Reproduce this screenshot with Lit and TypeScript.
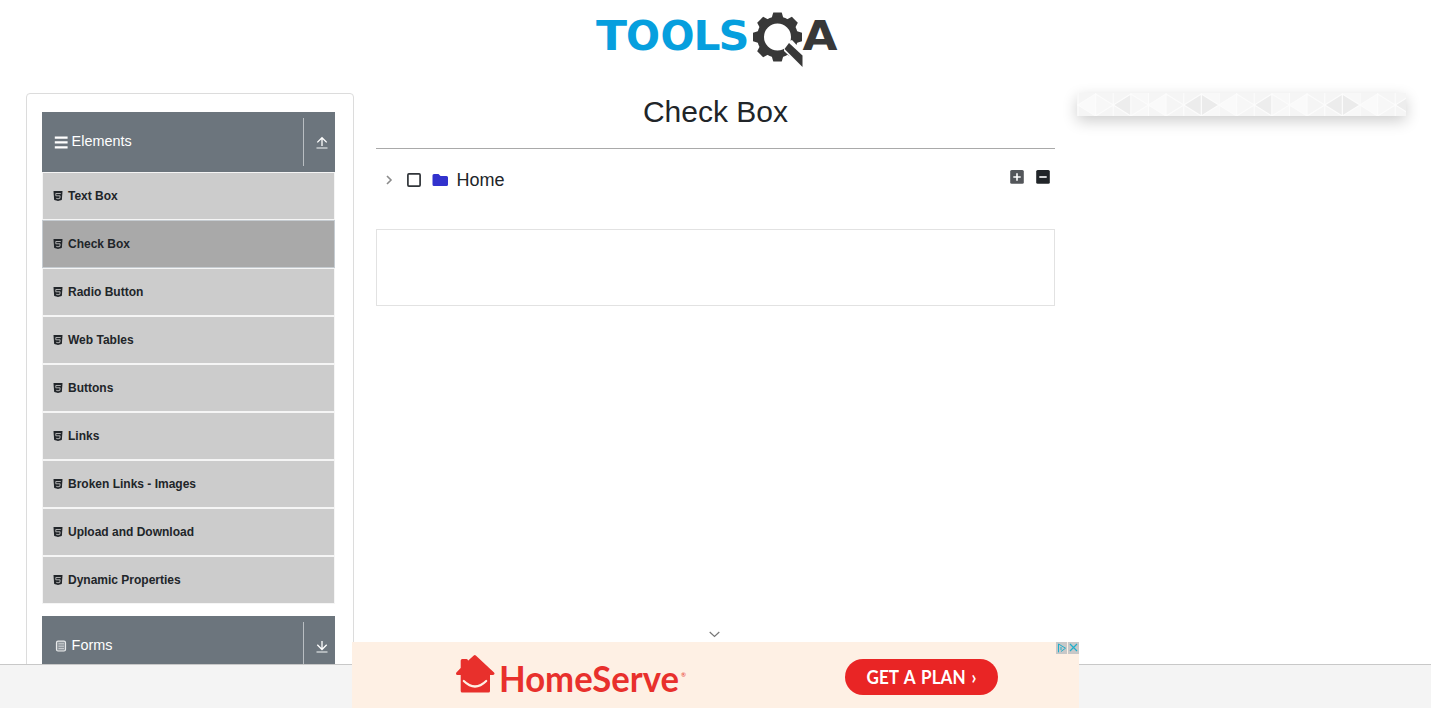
import { LitElement, html, svg, css } from 'lit';
import { customElement } from 'lit/decorators.js';

const items = ['Text Box', 'Check Box', 'Radio Button', 'Web Tables', 'Buttons', 'Links', 'Broken Links - Images', 'Upload and Download', 'Dynamic Properties'];

const html5 = html`<svg class="h5" viewBox="0 0 10 10"><path d="M.5 0H9.500L8.900 8.600Q8.800 9.400 5 10Q1.200 9.400 1.100 8.600Z" fill="currentColor"/><path d="M7.800 2.500H2.800V4.800H7.100L6.900 7.300L5 7.800L3.200 7.300" fill="none" stroke="#c4c4c4" stroke-width=".85"/></svg>`;

const arrow = (up: boolean) => html`<svg class="arrow" viewBox="0 0 12 14" fill="none">
  <path d=${up ? 'M6 10V2M1.3 6.4L6 1.7L10.7 6.4' : 'M6 1V9.5M1.3 4.8L6 9.500L10.7 4.8'} stroke="#fff" stroke-width="1.3"/>
  <path d="M.5 12H11.500" stroke="#c4c8cb" stroke-width="1.600"/></svg>`;

const teeth = [0, 45, 90, 135, 180, 225, 270, 315].map(a => svg`<path d="M-6.2 -18L-4.200 -24.500H4.200L6.200 -18Z" transform="rotate(${a})"/>`);

const diamonds = [
  ['#fafafa', '#f7f7f7'], ['#ededed', '#f6f6f6'], ['#fafafa', '#f5f5f5'], ['#ececec', '#ebebeb'],
].map(([l, r], i) => {
  const x = i * 35.25;
  return svg`<path d="M${x} 12L${x + 17.6} 1V23Z" fill=${l}/><path d="M${x + 35.2} 12L${x + 17.6} 1V23Z" fill=${r}/>
  <path d="M${x} 12L${x + 17.6} 1L${x + 35.2} 12L${x + 17.6} 23ZM${x + 17.6} 0V23M${x} 0V23" fill="none" stroke="#fcfcfc" stroke-width="1.2"/>`;
});

@customElement('app-root')
export class AppRoot extends LitElement {
  static styles = css`
    :host { display: block; position: relative; width: 1440px; height: 708px; overflow: hidden; background: #fff; color: #212529; font-family: "Liberation Sans", Arial, sans-serif; }
    * { box-sizing: border-box; }
    svg { display: block; flex: none; }
    .top { display: flex; height: 93px; padding-left: 590px; }
    .cols { display: flex; align-items: flex-start; padding-left: 26px; }
    .card { width: 328px; height: 640px; border: 1px solid #dcdcdc; border-radius: 4px; padding: 18px 18px 0 15px; }
    .group { display: flex; align-items: center; height: 60px; background: #6c757d; color: #fff; font-size: 14.4px; }
    .glyph { width: 14px; height: 14px; margin: 1px 3.6px 0 12px; }
    .name { flex: 1; line-height: 18px; margin-top: -2px; }
    .toggle { display: flex; align-items: center; width: 32px; height: 48px; border-left: 1px solid #b9bec2; padding: 2px 0 0 12px; }
    .arrow { width: 12px; height: 14px; }
    .list { margin-bottom: 12px; }
    .item { display: flex; align-items: center; height: 48px; border: 1px solid #f5f5f5; background: #ccc; padding-left: 10px; font-size: 12px; font-weight: bold; }
    .item.active { background: #a9a9a9; border-color: #c6ccd1; }
    .h5 { width: 10px; height: 10px; margin-right: 5px; }
    .main { width: 679px; margin-left: 22px; }
    h1 { margin: 0; height: 56px; border-bottom: 1px solid #a9a9a9; text-align: center; font-size: 30px; font-weight: 400; line-height: 38px; }
    .tree { display: flex; height: 80px; align-items: flex-start; padding: 22px 4px 0 8px; }
    .home { flex: 1; font-size: 18px; line-height: 20px; margin: -1px 0 0 7.500px; }
    .folder { margin-left: 8px; }
    .check { margin-left: 8px; }
    .tools { display: flex; gap: 10px; margin-top: -3px; }
    .result { height: 77px; border: 1px solid #e2e2e2; }
    .side { width: 329px; height: 23px; margin-left: 22px; box-shadow: 0 5px 15px rgba(0,0,0,.2); }
    .dock { position: absolute; left: 0; bottom: 0; width: 1431px; height: 44px; background: #f4f4f4; border-top: 1px solid #c8c8c8; }
    .ad { position: absolute; left: 352px; bottom: 0; width: 727px; height: 66px; background: #fef0e4; display: flex; }
    .brand { margin-left: 100px; }
    .cta { margin: 17px 0 0 151px; width: 153px; height: 36px; border-radius: 18px; background: #e92525; }
    .choices { display: flex; gap: 1px; margin-left: auto; }
    .choice { width: 11px; height: 12px; background: #c8c8c8; }
    .chev { position: absolute; left: 709px; top: 631px; }
  `;

  render() {
    return html`
      <header class="top">
        <svg width="255" height="80" font-family="DejaVu Sans, sans-serif" font-weight="bold">
          <g fill="#069fde" font-size="41">
            <text x="6" y="50" textLength="31" lengthAdjust="spacingAndGlyphs">T</text>
            <text x="36" y="50" textLength="34" lengthAdjust="spacingAndGlyphs">O</text>
            <text x="70.500" y="50" textLength="34" lengthAdjust="spacingAndGlyphs">O</text>
            <text x="103.500" y="50" textLength="27" lengthAdjust="spacingAndGlyphs">L</text>
            <text x="128.500" y="50" textLength="31" lengthAdjust="spacingAndGlyphs">S</text>
          </g>
          <g transform="translate(187.5 37)" fill="#383838">${teeth}<circle r="17" fill="none" stroke="#383838" stroke-width="7"/></g>
          <path d="M194 43L202 40L215 54V71L194 51Z" fill="#fff"/>
          <path d="M199 43L212.500 55.500V67L194.500 49Z" fill="#383838"/>
          <text x="212.500" y="50" font-size="41" fill="#383838" textLength="35" lengthAdjust="spacingAndGlyphs">A</text>
        </svg>
      </header>
      <div class="cols">
        <nav class="card">
          <div class="group">
            <svg class="glyph" viewBox="0 0 14 14"><path d="M.8 1.600H13.600M.8 6.400H13.600M.8 11.300H13.600" stroke="#fff" stroke-width="2.200"/></svg>
            <span class="name">Elements</span><span class="toggle">${arrow(true)}</span>
          </div>
          <div class="list">${items.map(t => html`<div class="item ${t === 'Check Box' ? 'active' : ''}">${html5}${t}</div>`)}</div>
          <div class="group">
            <svg class="glyph" viewBox="0 0 14 14" fill="none" stroke="#e9ebec"><rect x="2.500" y="1.200" width="9" height="9.800" rx="1.500" fill="#8e959b" stroke-width="1.200"/><path d="M4.500 3.800H10M4.500 6.200H10M4.500 8.600H10" stroke="#d5d8da" stroke-width=".9"/></svg>
            <span class="name">Forms</span><span class="toggle">${arrow(false)}</span>
          </div>
        </nav>
        <main class="main">
          <h1>Check Box</h1>
          <div class="tree">
            <svg width="14" height="18" viewBox="0 0 14 18"><path d="M3 5L7 9L3 13" fill="none" stroke="#8b8b8b" stroke-width="1.600"/></svg>
            <svg class="check" width="18" height="18"><rect x="1.900" y="2.900" width="12.200" height="12.200" rx="1" fill="none" stroke="#303439" stroke-width="1.700"/></svg>
            <svg class="folder" width="17" height="18"><path d="M2 3H6.500L8.500 5H14.500Q16 5 16 6.500V13.500Q16 15 14.500 15H2Q.5 15 .5 13.500V4.500Q.5 3 2 3Z" fill="#3232cd"/></svg>
            <span class="home">Home</span>
            <span class="tools">
              <svg width="16" height="18"><rect x="1.200" y="2" width="13.600" height="13.800" rx="1.500" fill="#53565a"/><path d="M4.300 9H11.700M8 5.300V12.700" stroke="#fff" stroke-width="1.600"/></svg>
              <svg width="16" height="18"><rect x="1.200" y="2" width="13.600" height="13.800" rx="1.500" fill="#212529"/><path d="M4.300 9H11.700" stroke="#fff" stroke-width="1.600"/></svg>
            </span>
          </div>
          <div class="result"></div>
        </main>
        <aside class="side"><svg width="329" height="23"><defs><pattern id="tri" x="1" width="141" height="23" patternUnits="userSpaceOnUse"><rect width="141" height="23" fill="#f5f5f5"/><path d="M53 0H70V23H53ZM123.500 0H141V23H123.500Z" fill="#f8f8f8"/>${diamonds}</pattern></defs><rect width="329" height="23" fill="url(#tri)"/></svg></aside>
      </div>
      <div class="dock"></div>
      <svg class="chev" width="11" height="7"><path d="M.7 1L5.500 5.500L10.300 1" fill="none" stroke="#777" stroke-width="1.200"/></svg>
      <section class="ad">
        <svg class="brand" width="242" height="66">
          <path d="M22.800 14.500L41 31.500H36.500V49H10.200V31.500H5.500L10.200 26.500V18.500H14.500V22Z" fill="#e8302c" stroke="#e8302c" stroke-width="3" stroke-linejoin="round"/>
          <path d="M11.800 39Q23 50 34.200 39" fill="none" stroke="#fef0e4" stroke-width="2.200" stroke-linecap="round"/>
          <text x="47" y="50" fill="#e8302c" font-family="Lato, sans-serif" font-size="36" font-weight="700" textLength="180" lengthAdjust="spacingAndGlyphs">HomeServe</text>
          <text x="229" y="34.500" fill="#e8302c" font-family="Lato, sans-serif" font-size="6">®</text>
        </svg>
        <div class="cta"><svg width="153" height="36"><text x="21.500" y="25" fill="#fff" font-family="Lato, sans-serif" font-size="18.500" font-weight="700" word-spacing="2" textLength="110" lengthAdjust="spacingAndGlyphs">GET A PLAN ›</text></svg></div>
        <div class="choices">
          <svg class="choice" viewBox="0 0 11 12" fill="none" stroke="#20aecb" stroke-width="1"><path d="M2.500 10.300V2L9.500 6.200L5 9.500M5 5V8"/></svg>
          <svg class="choice" viewBox="0 0 11 12" fill="none" stroke="#20aecb" stroke-width="1.200"><path d="M2 2L9 9M9 2L2 9"/></svg>
        </div>
      </section>`;
  }
}
